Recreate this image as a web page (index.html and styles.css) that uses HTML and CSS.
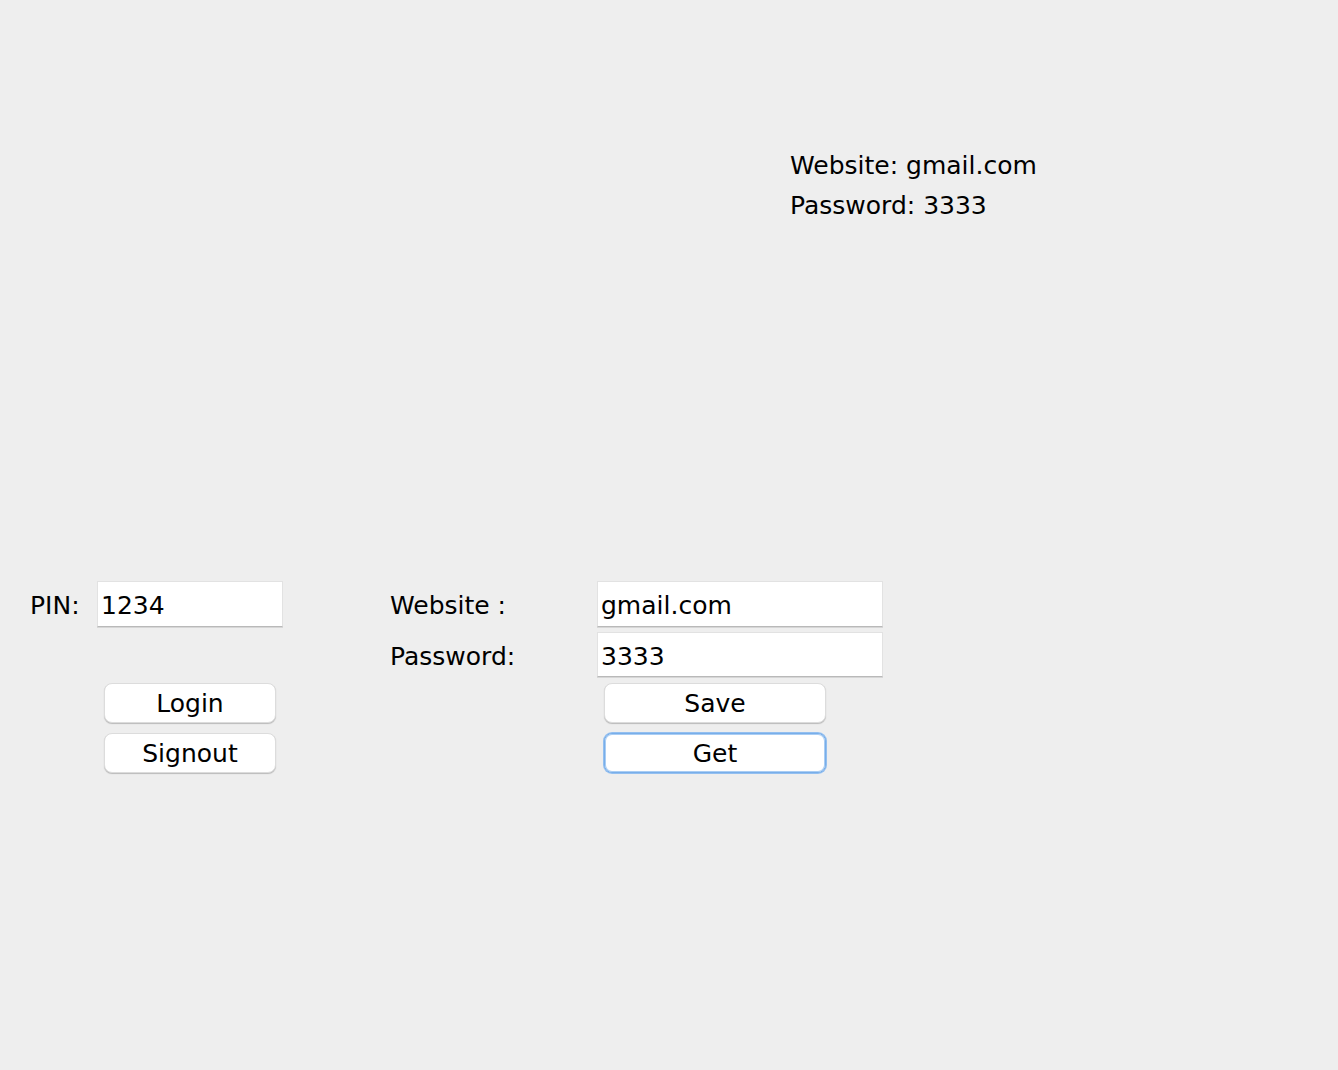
FILE: index.html
```html
<!DOCTYPE html>
<html>
<head>
<meta charset="utf-8">
<link rel="stylesheet" href="styles.css">
</head>
<body>
<div class="window">
  <div class="result">
    <div class="result-line">Website: gmail.com</div>
    <div class="result-line">Password: 3333</div>
  </div>
  <div class="form">
    <label class="label pin-label">PIN:</label>
    <input class="field pin-field" type="text" value="1234">
    <label class="label site-label">Website :</label>
    <input class="field site-field" type="text" value="gmail.com">
    <label class="label pass-label">Password:</label>
    <input class="field pass-field" type="text" value="3333">
    <button class="btn btn-left login">Login</button>
    <button class="btn btn-left signout">Signout</button>
    <button class="btn btn-right save">Save</button>
    <button class="btn btn-right get focused">Get</button>
  </div>
</div>
</body>
</html>
```
FILE: styles.css
```css
html, body {
  margin: 0;
  padding: 0;
  background: #eeeeee;
}
body {
  width: 1338px;
  height: 1070px;
  overflow: hidden;
  font-family: "DejaVu Sans", "Liberation Sans", sans-serif;
  font-size: 25px;
  color: #000;
}
.window {
  display: flex;
  flex-direction: column;
}
.result {
  margin-top: 146px;
  margin-left: 790px;
  line-height: 40px;
}
.form {
  margin-top: 355px;
  margin-left: 30px;
  display: grid;
  grid-template-columns: 67px 186px 107px 207px 286px;
  grid-template-rows: 46px 45px 46px 40px;
  row-gap: 5px;
}
.label {
  align-self: center;
  white-space: nowrap;
  padding-top: 3px;
}
.pin-label { grid-column: 1; grid-row: 1; }
.site-label { grid-column: 4; grid-row: 1; }
.pass-label { grid-column: 4; grid-row: 2; }
.field {
  box-sizing: border-box;
  width: 100%;
  height: 100%;
  margin: 0;
  padding: 3px 3px 0;
  border: 1px solid #e2e2e2;
  border-bottom: 1px solid #b9b9b9;
  background: #fff;
  font: inherit;
  color: #000;
  outline: none;
  box-shadow: 0 1px 0 #d6d6d6;
}
.pin-field { grid-column: 2; grid-row: 1; }
.site-field { grid-column: 5; grid-row: 1; }
.pass-field { grid-column: 5; grid-row: 2; }
.btn {
  box-sizing: border-box;
  height: 40px;
  margin: 0;
  padding: 2px 0 0;
  background: #fff;
  border: 1px solid #dcdcdc;
  border-radius: 8px;
  box-shadow: 0 1px 1px rgba(0, 0, 0, 0.22);
  font: inherit;
  color: #000;
  line-height: 36px;
  align-self: start;
}
.btn-left {
  grid-column: 2;
  width: 172px;
  margin-left: 7px;
}
.btn-right {
  grid-column: 5;
  width: 222px;
  margin-left: 7px;
}
.login, .save { grid-row: 3; margin-top: 1px; }
.signout, .get { grid-row: 4; }
.focused {
  border: 1px solid #78aee9;
  box-shadow: 0 0 0 1px #93bff0, inset 0 0 0 1px #a9cdf4;
}
```
